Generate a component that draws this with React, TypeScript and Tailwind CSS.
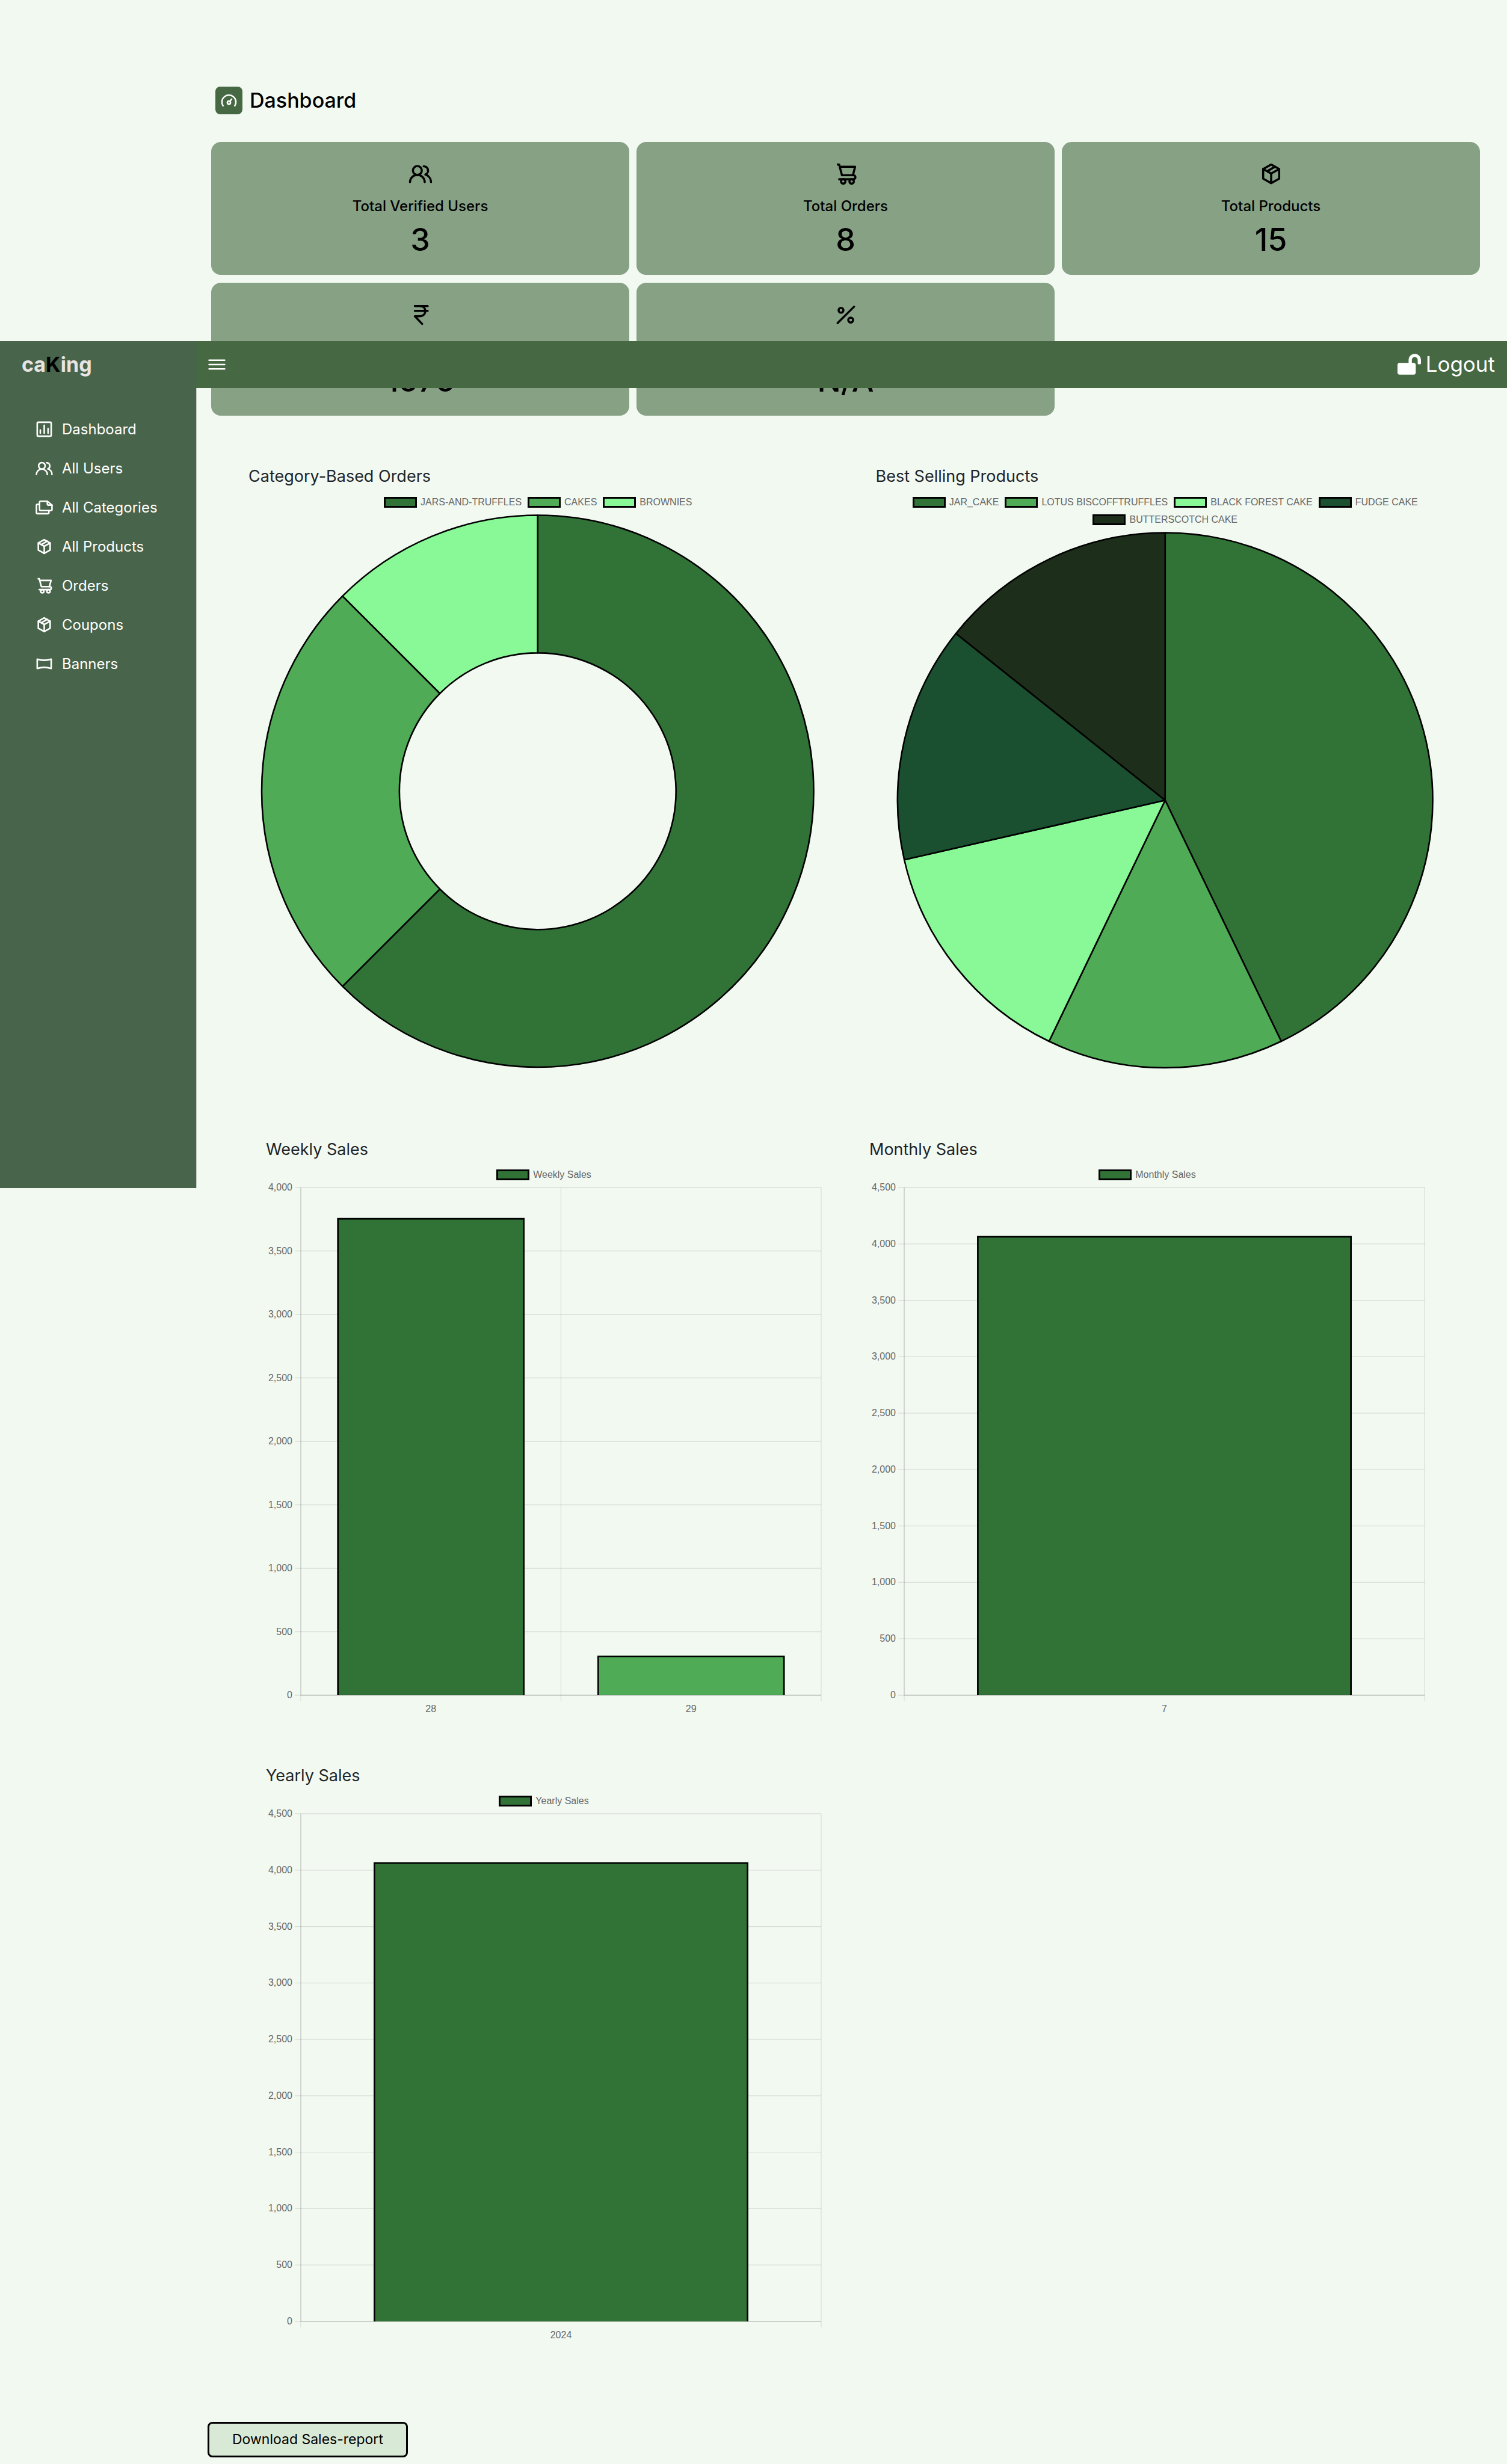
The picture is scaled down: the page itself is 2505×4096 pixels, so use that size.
import React from "react";
import { FaLockOpen } from "react-icons/fa";

type IconProps = { className?: string };

function Stroke({ className, children }: IconProps & { children: React.ReactNode }) {
  return (
    <svg
      viewBox="0 0 24 24"
      fill="none"
      stroke="currentColor"
      strokeWidth={2}
      strokeLinecap="round"
      strokeLinejoin="round"
      aria-hidden="true"
      className={className}
    >
      {children}
    </svg>
  );
}

const ChartIcon = (p: IconProps) => (
  <Stroke {...p}>
    <rect x="3" y="3" width="18" height="18" rx="1.5" />
    <path d="M7 13v4M12 7v10M17 11v6" />
  </Stroke>
);

const UsersIcon = (p: IconProps) => (
  <Stroke {...p}>
    <circle cx="9" cy="8.8" r="4.2" />
    <path d="M2 19.9a7 6.9 0 0 1 14 0M15 4.8a4.1 4.1 0 0 1 1.6 7.9c3.1 1.1 5.4 3.900 5.400 7.200" />
  </Stroke>
);

const CardsIcon = (p: IconProps) => (
  <Stroke {...p}>
    <path d="M7.500 4H16l6 5v5.500a1.500 1.500 0 0 1-1.500 1.500h-13A1.500 1.500 0 0 1 6 14.500v-9A1.500 1.500 0 0 1 7.500 4Z" />
    <path d="M16 4v3.500A1.500 1.500 0 0 0 17.500 9H22" />
    <path d="M6 8H3.500A1.500 1.500 0 0 0 2 9.500v9A1.500 1.500 0 0 0 3.500 20h13a1.500 1.500 0 0 0 1.500-1.500V16" />
  </Stroke>
);

const BoxIcon = (p: IconProps) => (
  <Stroke {...p}>
    <path d="M12 3.100 19.600 7.400v9.200L12 20.900l-7.600-4.300V7.400Z" />
    <path d="m4.400 7.400 7.600 4.300 7.600-4.300M12 11.700v9.200M8.200 9.500l7.600-4.300" />
  </Stroke>
);

const CartIcon = (p: IconProps) => (
  <Stroke {...p}>
    <path strokeLinecap="butt" d="M3.500 3.200h2.100l.7 2" />
    <path d="M6.200 5.300h14.600l-2.100 8H8.300Z" />
    <path d="M18.700 13.300h.5a1.900 1.900 0 0 1 0 3.800H5.600" />
    <circle cx="9.500" cy="19.200" r="2.100" />
    <circle cx="17.500" cy="19.200" r="2.100" />
  </Stroke>
);

const BannerIcon = (p: IconProps) => (
  <Stroke {...p}>
    <path d="M3 6c6 1.900 12 1.900 18 0v12c-6-1.900-12-1.900-18 0Z" />
  </Stroke>
);

const RupeeIcon = (p: IconProps) => (
  <Stroke {...p}>
    <path d="M6.600 3.900h12.200M6.600 8.400h12.200M11 3.900c3.600 0 5.500 2 5.500 4.700 0 2.900-2 5-5.500 5H6.600l6.900 7.200" />
  </Stroke>
);

const PercentIcon = (p: IconProps) => (
  <Stroke {...p}>
    <path d="M19.800 4.500 4.200 20" />
    <circle cx="7.400" cy="7.900" r="2.300" />
    <circle cx="16.600" cy="17.200" r="2.300" />
  </Stroke>
);

const GaugeIcon = (p: IconProps) => (
  <Stroke {...p}>
    <path d="M4.400 18.500a9 9 0 1 1 15.200 0" />
    <circle cx="12" cy="14.400" r="2" />
    <path d="m13.200 12.800 2.300-2.900" />
  </Stroke>
);

const DARK = "#317337";
const MID = "#50ab56";
const LIGHT = "#89f896";

const menu = [
  { label: "Dashboard", Icon: ChartIcon },
  { label: "All Users", Icon: UsersIcon },
  { label: "All Categories", Icon: CardsIcon },
  { label: "All Products", Icon: BoxIcon },
  { label: "Orders", Icon: CartIcon },
  { label: "Coupons", Icon: BoxIcon },
  { label: "Banners", Icon: BannerIcon },
];

const stats = [
  { label: "Total Verified Users", value: "3", Icon: UsersIcon },
  { label: "Total Orders", value: "8", Icon: CartIcon },
  { label: "Total Products", value: "15", Icon: BoxIcon },
  { label: "Total Revenue", value: "1575", Icon: RupeeIcon },
  { label: "Total Discount", value: "N/A", Icon: PercentIcon },
];

type Slice = { label: string; value: number; color: string };

const categories: Slice[] = [
  { label: "JARS-AND-TRUFFLES", value: 5, color: DARK },
  { label: "CAKES", value: 2, color: MID },
  { label: "BROWNIES", value: 1, color: LIGHT },
];

const products: Slice[] = [
  { label: "JAR_CAKE", value: 3, color: DARK },
  { label: "LOTUS BISCOFFTRUFFLES", value: 1, color: MID },
  { label: "BLACK FOREST CAKE", value: 1, color: LIGHT },
  { label: "FUDGE CAKE", value: 1, color: "#1a4f2f" },
  { label: "BUTTERSCOTCH CAKE", value: 1, color: "#1d2f1a" },
];

function Legend({ items }: { items: { label: string; color: string }[] }) {
  return (
    <ul className="flex flex-wrap justify-center gap-x-2.5 font-['Liberation_Sans',Arial,sans-serif] text-base text-[#666666]">
      {items.map((it) => (
        <li key={it.label} className="flex h-[29px] items-center gap-1.5">
          <span className="h-[18px] w-[55px] border-[3px] border-black" style={{ backgroundColor: it.color }} />
          {it.label}
        </li>
      ))}
    </ul>
  );
}

function PieChart({ data, radius, hole }: { data: Slice[]; radius: number; hole: number }) {
  const size = radius * 2 + 3;
  const cx = 481;
  const cy = size / 2;
  const total = data.reduce((s, d) => s + d.value, 0);
  const at = (r: number, t: number) =>
    `${(cx + r * Math.sin(t * 2 * Math.PI)).toFixed(2)} ${(cy - r * Math.cos(t * 2 * Math.PI)).toFixed(2)}`;
  let acc = 0;
  return (
    <svg viewBox={`0 0 963 ${size}`} className="mt-1.5 block w-full" role="img">
      {data.map((d) => {
        const a = acc / total;
        acc += d.value;
        const b = acc / total;
        const large = b - a > 0.5 ? 1 : 0;
        const inner = hole > 0 ? `L${at(hole, b)}A${hole} ${hole} 0 ${large} 0 ${at(hole, a)}Z` : `L${cx} ${cy}Z`;
        return (
          <path
            key={d.label}
            d={`M${at(radius, a)}A${radius} ${radius} 0 ${large} 1 ${at(radius, b)}${inner}`}
            fill={d.color}
            stroke="#000"
            strokeWidth={2.6}
            strokeLinejoin="bevel"
          />
        );
      })}
    </svg>
  );
}

type Bar = { label: string; value: number; color: string };

function BarChart({ data, max }: { data: Bar[]; max: number }) {
  const left = 58;
  const right = 923;
  const top = 16;
  const bottom = 860;
  const steps = max / 500;
  const cat = (right - left) / data.length;
  const y = (v: number) => bottom - (v / max) * (bottom - top);
  return (
    <svg
      viewBox="0 0 924 896"
      className="-mt-2.5 block w-full font-['Liberation_Sans',Arial,sans-serif] text-base"
      role="img"
    >
      {Array.from({ length: steps + 1 }, (_, i) => i * 500).map((v) => (
        <g key={v}>
          <line x1={48} x2={right} y1={y(v)} y2={y(v)} stroke="#000" strokeOpacity={0.1} strokeWidth={1.3} />
          <text x={44} y={y(v) + 5} textAnchor="end" fill="#666666">
            {v.toLocaleString("en-US")}
          </text>
        </g>
      ))}
      {Array.from({ length: data.length + 1 }, (_, i) => left + i * cat).map((x) => (
        <line key={x} x1={x} x2={x} y1={top} y2={bottom + 10} stroke="#000" strokeOpacity={0.1} strokeWidth={1.3} />
      ))}
      {data.map((d, i) => {
        const x0 = left + i * cat + cat * 0.14;
        const x1 = x0 + cat * 0.72;
        return (
          <g key={d.label}>
            <rect x={x0} y={y(d.value)} width={x1 - x0} height={bottom - y(d.value)} fill={d.color} />
            <path
              d={`M${x0 + 1.3} ${bottom}V${y(d.value) + 1.3}H${x1 - 1.3}V${bottom}`}
              fill="none"
              stroke="#000"
              strokeWidth={2.6}
            />
            <text x={left + (i + 0.5) * cat} y={888} textAnchor="middle" fill="#666666">
              {d.label}
            </text>
          </g>
        );
      })}
      <path d={`M${left} ${top}V${bottom}H${right}`} fill="none" stroke="#000" strokeOpacity={0.12} strokeWidth={1.3} />
    </svg>
  );
}

function Figure({ title, legend, children }: { title: string; legend: { label: string; color: string }[]; children: React.ReactNode }) {
  return (
    <section className="min-w-0 pt-0.5">
      <h2 className="mb-3 text-[27px] leading-8 text-[#212529]">{title}</h2>
      <Legend items={legend} />
      {children}
    </section>
  );
}

export default function App() {
  return (
    <div className="relative flex min-h-screen items-start bg-[#f2f9f1] font-['Inter','Open_Sans',sans-serif] text-black">
      <aside className="mt-[567px] min-h-[1408px] w-[327px] shrink-0 border-r border-[#c3c8c2] bg-[#48644a] text-white">
        <a href="#home" className="flex h-[78px] items-center pl-9 text-[34px] leading-none font-bold text-[#e9e4e4]">
          <span>
            ca<span className="text-black">K</span>ing
          </span>
        </a>
        <nav className="mt-9 pl-[58px]">
          {menu.map(({ label, Icon }) => (
            <a key={label} href="#menu" className="flex h-[65px] items-center gap-3.5 text-2xl">
              <Icon className="size-[31px]" />
              {label}
            </a>
          ))}
        </nav>
      </aside>

      <header className="absolute top-[567px] right-0 left-[326px] z-10 flex h-[78px] items-center justify-between bg-[#466842] px-5 text-white">
        <button type="button" aria-label="Toggle menu">
          <svg viewBox="0 0 29 18" className="block h-[18px] w-[29px]" stroke="currentColor" strokeWidth={2.4} strokeLinecap="round">
            <path d="M1.500 1.800h26M1.500 9h26M1.500 16.200h26" />
          </svg>
        </button>
        <button type="button" className="flex items-center gap-2 pb-0.5 text-[35px] leading-none">
          <FaLockOpen className="h-[35px] w-[39px]" />
          Logout
        </button>
      </header>

      <main className="min-w-0 flex-1 pt-36 pb-2">
        <div className="flex items-center gap-3 pl-[31px]">
          <span className="flex h-[46px] w-[45px] items-center justify-center rounded-lg bg-[#466842] text-white">
            <GaugeIcon className="size-[31px]" />
          </span>
          <h1 className="text-[34px] leading-none font-medium">Dashboard</h1>
        </div>

        <div className="mt-[46px] grid grid-cols-3 gap-x-3 gap-y-[13px] pr-[45px] pl-6">
          {stats.map(({ label, value, Icon }) => (
            <div key={label} className="flex flex-col items-center rounded-2xl bg-[#87a185] pt-8 pb-8">
              <Icon className="size-[42px]" />
              <div className="mt-[19px] text-2xl leading-7 font-medium">{label}</div>
              <div className="mt-4 text-[52px] leading-[52px] font-medium">{value}</div>
            </div>
          ))}
        </div>

        <div className="mt-[83px] grid grid-cols-2 gap-x-20 pr-[87px] pl-[86px]">
          <Figure title="Category-Based Orders" legend={categories}>
            <PieChart data={categories} radius={459} hole={230} />
          </Figure>
          <Figure title="Best Selling Products" legend={products}>
            <PieChart data={products} radius={445} hole={0} />
          </Figure>
        </div>

        <div className="mt-[116px] grid grid-cols-2 gap-x-[79px] gap-y-20 pr-[136px] pl-[115px]">
          <Figure title="Weekly Sales" legend={[{ label: "Weekly Sales", color: DARK }]}>
            <BarChart
              max={4000}
              data={[
                { label: "28", value: 3759, color: DARK },
                { label: "29", value: 311, color: MID },
              ]}
            />
          </Figure>
          <Figure title="Monthly Sales" legend={[{ label: "Monthly Sales", color: DARK }]}>
            <BarChart max={4500} data={[{ label: "7", value: 4070, color: DARK }]} />
          </Figure>
          <Figure title="Yearly Sales" legend={[{ label: "Yearly Sales", color: DARK }]}>
            <BarChart max={4500} data={[{ label: "2024", value: 4070, color: DARK }]} />
          </Figure>
        </div>

        <button
          type="button"
          className="mt-[131px] ml-[18px] h-[59px] rounded-lg border-[3px] border-black bg-[#d8e9d6] px-[38px] text-[23px] leading-7"
        >
          Download Sales-report
        </button>
      </main>
    </div>
  );
}
